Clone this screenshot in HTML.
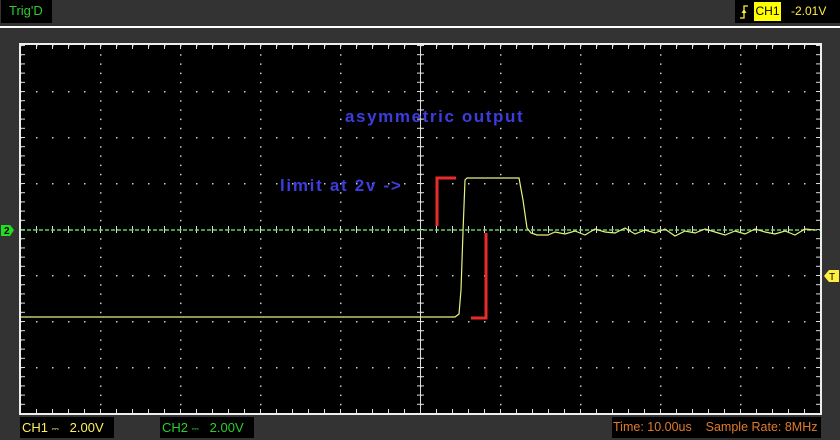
<!DOCTYPE html>
<html><head><style>
body{margin:0;width:840px;height:439px;background:#333;overflow:hidden;font-family:"Liberation Sans",sans-serif;position:relative}
.b{position:absolute;background:#000;font-size:12px;line-height:21px}
</style></head><body>
<div class="b" style="left:1px;top:0;width:51px;height:23px;color:#2ecc2e;padding-left:8px;box-sizing:border-box;font-size:13px">Trig'D</div>
<div class="b" style="left:735px;top:0;width:105px;height:23px;color:#ffee40">
 <svg style="position:absolute;left:4px;top:4px" width="12" height="16"><path d="M1 14H5V2H9" stroke="#ffee40" stroke-width="1.3" fill="none"/><path d="M5 5l-2.5 4h5z" fill="#ffee40"/></svg>
 <span style="position:absolute;left:19px;top:2px;width:27px;height:19px;background:#ffff00;color:#000;line-height:19px;text-align:center">CH1</span>
 <span style="position:absolute;left:56px;top:1px">-2.01V</span></div>
<div style="position:absolute;left:0;top:26px;width:840px;height:2px;background:#fff"></div>
<svg style="position:absolute;left:0;top:0" width="840" height="439">
<defs>
<pattern id="v" x="20" y="45" width="80" height="9.2" patternUnits="userSpaceOnUse"><rect x="0" y="0" width="1.5" height="1.5" fill="#ccc"/></pattern>
<pattern id="h" x="20" y="45" width="16" height="46" patternUnits="userSpaceOnUse"><rect x="0" y="0" width="1.5" height="1.5" fill="#ccc"/></pattern>
<pattern id="tx" x="20" y="0" width="16" height="439" patternUnits="userSpaceOnUse"><rect x="0" y="226" width="1" height="7" fill="#ddd"/><rect x="0" y="45" width="1" height="4" fill="#ddd"/><rect x="0" y="409" width="1" height="4" fill="#ddd"/></pattern>
<pattern id="ty" x="0" y="45" width="840" height="9.2" patternUnits="userSpaceOnUse"><rect x="417" y="0" width="7" height="1" fill="#ddd"/><rect x="21" y="0" width="4" height="1" fill="#ddd"/><rect x="816" y="0" width="4" height="1" fill="#ddd"/></pattern>
</defs>
<rect x="20" y="44" width="801" height="370" fill="#000" stroke="#eee" stroke-width="2"/>
<rect x="21" y="45" width="799" height="368" fill="url(#v)"/>
<rect x="21" y="45" width="799" height="368" fill="url(#h)"/>
<rect x="21" y="45" width="799" height="368" fill="url(#tx)"/>
<rect x="21" y="45" width="799" height="368" fill="url(#ty)"/>
<rect x="420" y="45" width="1" height="368" fill="#ddd"/>
<line x1="21" y1="230" x2="820" y2="230" stroke="#5fd35f" stroke-width="1.5" stroke-dasharray="4 2"/>
<path d="M21 317H455L459 314L461 290L463 232L465 180L467 178H519L523 200L527 228L531 233L537 235H548L555 232L565 234L575 231L585 235L595 229L605 232L615 233L625 228L635 234L645 230L655 233L665 229L675 236L685 231L695 233L705 229L715 232L725 235L735 231L745 234L755 229L765 232L775 234L785 231L795 235L805 229L815 230" stroke="#e8f080" stroke-width="1.2" fill="none"/>
<path d="M437 226V178H456" stroke="#e82b2b" stroke-width="3" fill="none"/>
<path d="M486 233V318H471" stroke="#e82b2b" stroke-width="3" fill="none"/>
<path d="M1 225H10L14 230L10 236H1Z" fill="#22dd22"/>
<text x="4" y="234" font-size="10" font-weight="bold" fill="#000" font-family="Liberation Sans">2</text>
<path d="M839 270H829L824 276L829 282H839Z" fill="#ffee40"/>
<text x="829" y="280" font-size="10" fill="#000" font-family="Liberation Sans">T</text>
<text x="345" y="122" font-size="17" font-weight="bold" letter-spacing="1.6" fill="#3d3ddd" font-family="Liberation Sans">asymmetric output</text>
<text x="280" y="191" font-size="17" font-weight="bold" letter-spacing="1.7" fill="#3d3ddd" font-family="Liberation Sans">limit at 2v -&gt;</text>
</svg>
<div class="b" style="left:20px;top:417px;width:92px;height:21px;color:#ffee60;padding-left:2px;font-size:13px">CH1 <span style="font-size:9px">⎓</span>&nbsp;&nbsp; 2.00V</div>
<div class="b" style="left:160px;top:417px;width:92px;height:21px;color:#2ecc2e;padding-left:2px;font-size:13px">CH2 <span style="font-size:9px">⎓</span>&nbsp;&nbsp; 2.00V</div>
<div class="b" style="left:612px;top:417px;width:208px;height:21px;color:#e07a2a;padding-left:1px;white-space:nowrap;font-size:12.5px">Time: 10.00us &nbsp;&nbsp;&nbsp;Sample Rate: 8MHz</div>
</body></html>
